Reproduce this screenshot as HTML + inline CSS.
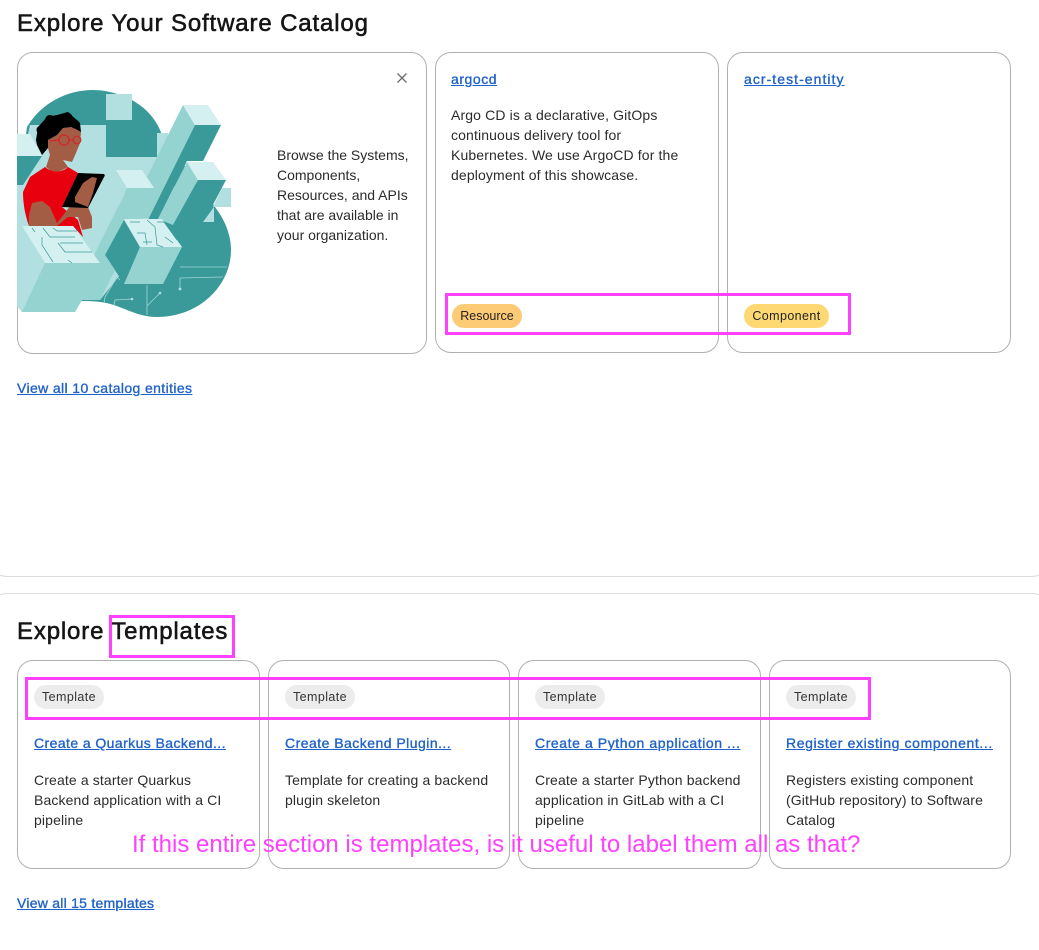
<!DOCTYPE html>
<html><head><meta charset="utf-8">
<style>
html,body{margin:0;padding:0;background:#fff}
#p{position:relative;width:1039px;height:950px;overflow:hidden;background:#fff;font-family:"Liberation Sans",sans-serif;color:#151515}
#p div,#p a,#p svg{position:absolute;white-space:nowrap}
.card{border:1px solid #b0b0b0;border-radius:16px;box-sizing:border-box;background:transparent}
.h{font-size:24px;line-height:30px;font-weight:500;color:#151515;-webkit-text-stroke:.55px #151515}
.t{font-size:14px;line-height:20px;color:#2b2b2b;letter-spacing:.13px}
a.l{font-size:14px;line-height:20px;color:#1f62c9;text-decoration:underline;-webkit-text-stroke:.35px #1f62c9;letter-spacing:.38px}
.b{height:24px;border-radius:12px;font-size:12.5px;line-height:24px;text-align:center;color:#222;letter-spacing:.25px}
.pk{border:3px solid #ff40ff;box-sizing:border-box}
</style></head><body><div id="p">
<div class="h" style="left:17px;top:9px;letter-spacing:.86px">Explore Your Software Catalog</div>

<div class="card" style="left:17px;top:52px;width:410px;height:302px"></div>
<div class="card" style="left:435px;top:52px;width:284px;height:301px"></div>
<div class="card" style="left:727px;top:52px;width:284px;height:301px"></div>

<svg style="left:0;top:60px" width="260" height="280" viewBox="0 60 260 280">
<path fill="#3a9a9a" d="M27 127C42 102 68 90 93 90C113 90 150 100 162 135L215 207C225 220 231 235 231 250C231 285 200 317 157 317C135 317 120 304 100 302C92 301 86 301 80 301L30 312L17 200Z"/>
<path fill="#b2e0e0" d="M30 125H106V157H157V133H168L176 200L140 250L100 300H82L75 312H22L17 306V185Z"/>
<rect x="106" y="94" width="26" height="26" fill="#b2e0e0"/>
<path fill="#d5f0f0" d="M17 134H30L42 156H17Z"/>
<path fill="#3a9a9a" d="M17 156H42L23 185H17Z"/>
<path fill="#95d3d1" d="M183 105L195 125L150 218L127 205L148 175Z"/>
<path fill="#3a9a9a" d="M195 125H221L203 161H187L158 219L148 220Z"/>
<path fill="#d5f0f0" d="M183 105H208L221 125H195Z"/>
<path fill="#95d3d1" d="M187 162L198 180L173 225L158 219Z"/>
<path fill="#3a9a9a" d="M198 180H226L204 222L215 222L215 255L163 284L173 225Z"/>
<path fill="#d5f0f0" d="M187 162H213L226 180H198Z"/>
<path fill="#b2e0e0" d="M222 188H231V207H213Z"/>
<path fill="#b2e0e0" d="M203 222L214 207V222Z"/>
<path fill="#b2e0e0" d="M116 170L127 188L95 253L100 263H70L78 232Z"/>
<path fill="#95d3d1" d="M127 188H154L149 200L149 218L124 220L105 255L115 270L100 300H82L95 253Z"/>
<path fill="#d5f0f0" d="M116 170H142L154 188H127Z"/>
<path fill="none" stroke="#b2e0e0" stroke-width=".7" d="M125 193L97 247"/>
<path fill="#3a9a9a" d="M105 255L124 220L140 247L124 284Z"/>
<path fill="#95d3d1" d="M140 247H182L163 284H124Z"/>
<path fill="#d5f0f0" d="M124 219H162L182 247H140Z"/>
<g fill="none" stroke="#9fd6d4" stroke-width=".8"><path d="M180 267H227M180 288V278L223 277M147 285V315M147 306L160 293M104 303L105 297L117 277L120 280M114 305L115 300L132 299"/></g>
<circle cx="180" cy="289" r="1.4" fill="#b2e0e0"/><circle cx="160" cy="293" r="1.3" fill="#b2e0e0"/><circle cx="132" cy="299" r="1.3" fill="#b2e0e0"/>
<path fill="#a45d45" d="M48 140L57 135L63 128L72 127L81 132L80 143L76 153L72 162L63 160L68 167L55 174L46 167L50 155L48 148Z"/>
<g fill="#000"><path d="M36 140L38 127L47 117L57 115L68 112L80 123L81 132L72 127L63 128L57 135L48 140L48 148L42 155L37 145Z"/><circle cx="41" cy="130" r="4.5"/><circle cx="50" cy="120" r="5"/><circle cx="67" cy="118" r="5.5"/><circle cx="75" cy="124" r="4.5"/><circle cx="41" cy="142" r="4.5"/></g>
<path fill="#e8000f" d="M23 192L30 177L45 167C52 173 62 173 68 167L78 173L62 207L78 220L83 237L73 226H29C24 212 23 200 23 192Z"/>
<path fill="#a45d45" d="M29 226V215L32 203L42 201L50 207L57 223L75 200L88 207L92 217L92 228L82 230L78 217L68 217L57 226Z"/>
<path fill="#000" d="M78 173L104 174C105 175 105 176 104 177L88 208L62 207Z"/>
<path fill="#a45d45" d="M75 197L83 183L92 177L97 178L93 193L88 207L75 202Z"/>
<g fill="none" stroke="#d0252d" stroke-width="1.2"><circle cx="64" cy="140" r="5"/><circle cx="77" cy="140" r="3.8"/><path d="M50 141L59 140M69 140H73"/></g>
<path fill="#d5f0f0" d="M22 226H73L100 263H45Z"/>
<path fill="#b2e0e0" d="M17 226H22L45 263L22 312L17 306Z"/>
<path fill="#95d3d1" d="M45 263H100L95 253L105 255L115 270L100 300H82L75 312H22Z"/>
<g fill="none" stroke="#3a9a9a" stroke-width=".7"><path d="M32 228L35 232M43 228L50 237H75M53 228L57 231H77M42 237V245L53 262M58 243L65 252H92M60 243H83M68 260L72 263M130 222H140M137 233H145L147 245M157 222H164L177 240M147 220L155 227L157 245L163 247M143 242H152M165 237L173 243"/></g>
</svg>
<svg style="left:395px;top:71px" width="14" height="14" viewBox="0 0 14 14"><path d="M2.5 2.5L11.5 11.5M11.5 2.5L2.5 11.5" stroke="#6a6e73" stroke-width="1.3" fill="none"/></svg>

<div class="t" style="left:277px;top:145px;letter-spacing:0">Browse the Systems,<br>Components,<br>Resources, and APIs<br>that are available in<br>your organization.</div>

<a class="l" style="left:451px;top:69px;letter-spacing:.55px">argocd</a>
<div class="t" style="left:451px;top:105px">Argo CD is a declarative, GitOps<br>continuous delivery tool for<br>Kubernetes. We use ArgoCD for the<br>deployment of this showcase.</div>
<a class="l" style="left:744px;top:69px;letter-spacing:1.05px">acr-test-entity</a>
<div class="b" style="left:452px;top:304px;width:70px;background:#fdcb76;letter-spacing:0">Resource</div>
<div class="b" style="left:744px;top:304px;width:85px;background:#fed873;letter-spacing:.4px">Component</div>
<a class="l" style="left:17px;top:378px">View all 10 catalog entities</a>

<div style="left:-20px;top:500px;width:1079px;height:77px;box-sizing:border-box;border:1px solid #dcdcdc;border-top:0;border-radius:0 0 28px 28px"></div>
<div style="left:-20px;top:593px;width:1079px;height:80px;box-sizing:border-box;border:1px solid #dcdcdc;border-bottom:0;border-radius:28px 28px 0 0"></div>

<div class="h" style="left:17px;top:617px;letter-spacing:.84px">Explore Templates</div>

<div class="card" style="left:17px;top:660px;width:243px;height:209px"></div>
<div class="card" style="left:268px;top:660px;width:242px;height:209px"></div>
<div class="card" style="left:518px;top:660px;width:243px;height:209px"></div>
<div class="card" style="left:769px;top:660px;width:242px;height:209px"></div>

<div class="b" style="left:34px;top:685px;width:70px;background:#ececec;color:#333;letter-spacing:.4px">Template</div>
<div class="b" style="left:285px;top:685px;width:70px;background:#ececec;color:#333;letter-spacing:.4px">Template</div>
<div class="b" style="left:535px;top:685px;width:70px;background:#ececec;color:#333;letter-spacing:.4px">Template</div>
<div class="b" style="left:786px;top:685px;width:70px;background:#ececec;color:#333;letter-spacing:.4px">Template</div>

<a class="l" style="left:34px;top:733px;letter-spacing:.42px">Create a Quarkus Backend...</a>
<a class="l" style="left:285px;top:733px;letter-spacing:.47px">Create Backend Plugin...</a>
<a class="l" style="left:535px;top:733px;letter-spacing:.58px">Create a Python application ...</a>
<a class="l" style="left:786px;top:733px;letter-spacing:.62px">Register existing component...</a>

<div class="t" style="left:34px;top:770px">Create a starter Quarkus<br>Backend application with a CI<br>pipeline</div>
<div class="t" style="left:285px;top:770px">Template for creating a backend<br>plugin skeleton</div>
<div class="t" style="left:535px;top:770px">Create a starter Python backend<br>application in GitLab with a CI<br>pipeline</div>
<div class="t" style="left:786px;top:770px">Registers existing component<br>(GitHub repository) to Software<br>Catalog</div>

<a class="l" style="left:17px;top:893px;letter-spacing:.25px">View all 15 templates</a>

<div class="pk" style="left:445px;top:293px;width:406px;height:42px"></div>
<div class="pk" style="left:109px;top:615px;width:126px;height:43px"></div>
<div class="pk" style="left:25px;top:677px;width:846px;height:43px"></div>
<div style="left:132px;top:830px;font-size:24px;line-height:30px;color:#ff40ff">If this entire section is templates, is it useful to label them all as that?</div>
</div></body></html>
